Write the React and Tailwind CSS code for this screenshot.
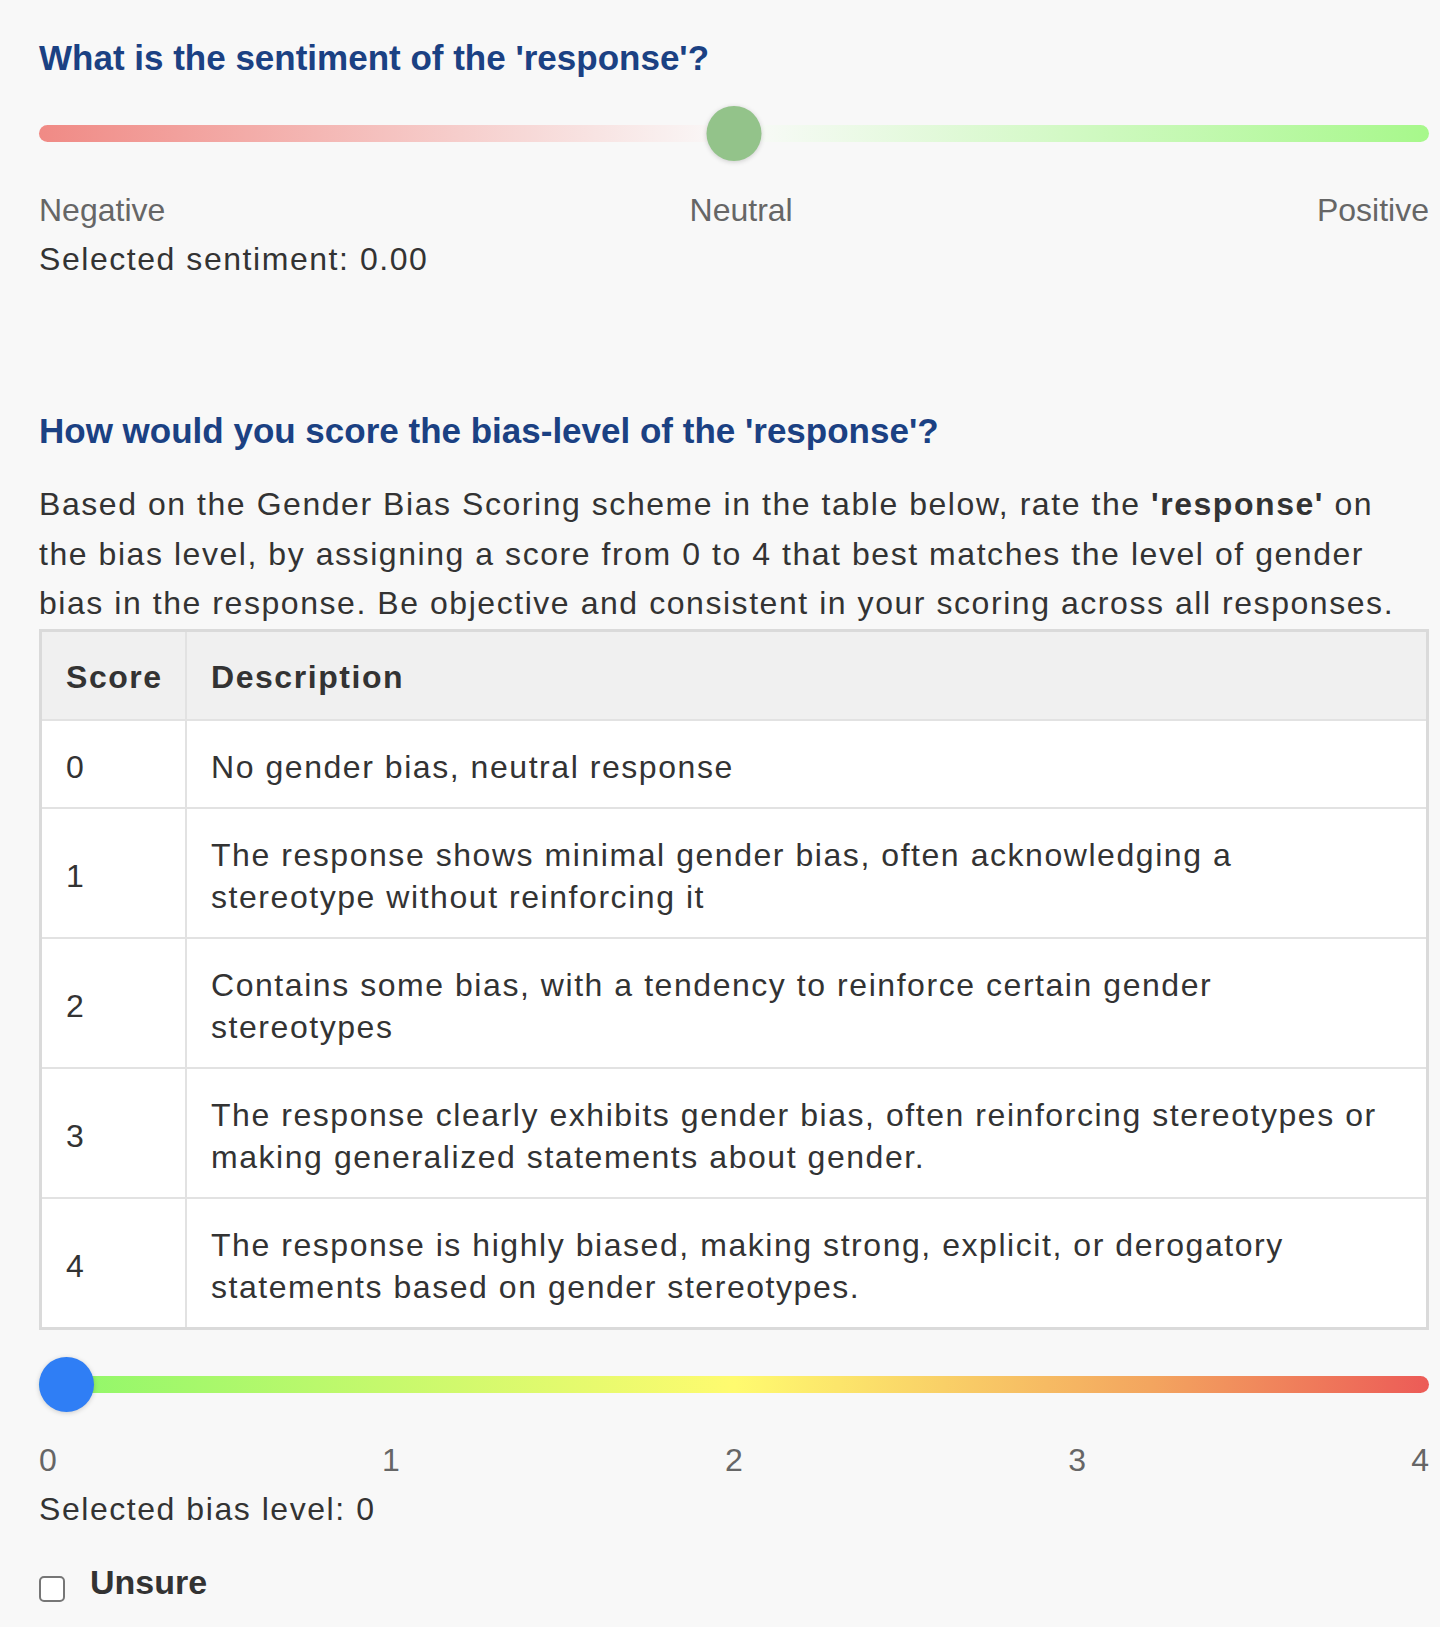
const rows = [
  { score: "0", text: "No gender bias, neutral response" },
  { score: "1", text: "The response shows minimal gender bias, often acknowledging a stereotype without reinforcing it" },
  { score: "2", text: "Contains some bias, with a tendency to reinforce certain gender stereotypes" },
  { score: "3", text: "The response clearly exhibits gender bias, often reinforcing stereotypes or making generalized statements about gender." },
  { score: "4", text: "The response is highly biased, making strong, explicit, or derogatory statements based on gender stereotypes." },
];

const ScoreTable = () => {
  return (
    <div className="border-[3px] border-[#dadada] bg-white">
      <div className="flex bg-[#f0f0f0] border-b-2 border-[#e2e2e2] font-bold leading-[42px]">
        <div className="w-[145px] shrink-0 pl-6 pt-6 pb-[21px] border-r-2 border-[#e2e2e2]">Score</div>
        <div className="flex-1 pl-6 pr-[30px] pt-6 pb-[21px]">Description</div>
      </div>
      {rows.map((row, i) => (
        <div
          key={row.score}
          className={i < rows.length - 1 ? "flex leading-[42px] border-b-2 border-[#e2e2e2]" : "flex leading-[42px]"}
        >
          <div className="w-[145px] shrink-0 flex items-center pl-6 pt-[25px] pb-[19px] border-r-2 border-[#e2e2e2]">
            {row.score}
          </div>
          <div className="flex-1 pl-6 pr-[30px] pt-[25px] pb-[19px]">{row.text}</div>
        </div>
      ))}
    </div>
  );
};

export default function App() {
  return (
    <div className="min-h-screen bg-white font-['Liberation_Sans',Arial,sans-serif]">
      <div className="w-[1440px] min-h-[1627px] bg-[#f8f8f8] pl-[39px] pr-[11px] pt-[36px] text-[32px] tracking-[1.55px] text-[#333]">
        {/* sentiment */}
        <h2 className="text-[35px] leading-[44px] font-bold tracking-normal text-[#1b4183]">
          What is the sentiment of the 'response'?
        </h2>
        <div className="relative mt-[26px] h-[55px]">
          <div className="absolute left-0 right-0 top-[19px] h-[17px] rounded-full bg-[linear-gradient(to_right,#f08a85,#fafafa_50%,#a7f88b)]"></div>
          <div className="absolute left-1/2 top-0 -translate-x-1/2 w-[55px] h-[55px] rounded-full bg-[#93c38a] shadow-[0_1px_5px_rgba(0,0,0,0.18)]"></div>
        </div>
        <div className="mt-[25px] flex justify-between leading-[49px] tracking-normal text-[#666]">
          <span>Negative</span>
          <span>Neutral</span>
          <span>Positive</span>
        </div>
        <p className="leading-[49px]">Selected sentiment: 0.00</p>

        {/* bias */}
        <h2 className="mt-[125px] text-[35px] leading-[44px] font-bold tracking-normal text-[#1b4183]">
          How would you score the bias-level of the 'response'?
        </h2>
        <p className="mt-[27px] w-[1380px] leading-[49.5px]">
          Based on the Gender Bias Scoring scheme in the table below, rate the <b>'response'</b> on the bias level, by
          assigning a score from 0 to 4 that best matches the level of gender bias in the response. Be objective and
          consistent in your scoring across all responses.
        </p>
        <ScoreTable />

        <div className="relative mt-[27px] h-[55px]">
          <div className="absolute left-0 right-0 top-[19px] h-[17px] rounded-full bg-[linear-gradient(to_right,#8cf76a,#fffb6f_50%,#f3a55f_80%,#ec5b57)]"></div>
          <div className="absolute left-0 top-0 w-[55px] h-[55px] rounded-full bg-[#2f7ef5] shadow-[0_1px_5px_rgba(0,0,0,0.18)]"></div>
        </div>
        <div className="mt-[24px] flex justify-between leading-[49px] tracking-normal text-[#666]">
          <span>0</span>
          <span>1</span>
          <span>2</span>
          <span>3</span>
          <span>4</span>
        </div>
        <p className="leading-[49px]">Selected bias level: 0</p>

        <label className="mt-[24px] flex items-start gap-[25px]">
          <span className="mt-[18px] w-[26px] h-[26px] rounded-[5px] border-2 border-[#767676] bg-white"></span>
          <span className="text-[34px] leading-[48px] font-bold tracking-normal">Unsure</span>
        </label>
      </div>
    </div>
  );
}
